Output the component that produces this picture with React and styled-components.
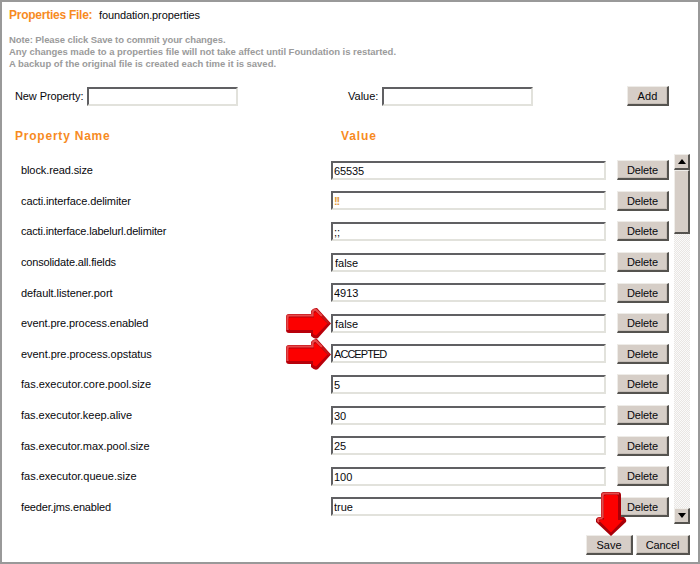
import React from "react";
import styled, { createGlobalStyle, css } from "styled-components";

const GlobalStyle = createGlobalStyle`
  * { box-sizing: border-box; }
  body { margin: 0; background: #fff; }
`;

const Frame = styled.main`
  width: 700px;
  height: 564px;
  border: 2px solid #999;
  background: #fff;
  color: #08080c;
  font: 11px/14px "Liberation Sans", Arial, sans-serif;
  overflow: hidden;
  white-space: nowrap;
`;

const FileHeader = styled.header`
  display: flex;
  align-items: baseline;
  height: 20px;
  padding: 6px 0 0 7px;
`;

const FileTitle = styled.h1`
  margin: 0;
  width: 90px;
  font-size: 12px;
  line-height: 15px;
  letter-spacing: -0.25px;
  color: #f78b1f;
`;

const Label = styled.span`
  letter-spacing: ${(p) => p.$track || 0}px;
`;

const Note = styled.p`
  margin: 0;
  padding: 12px 0 0 7px;
  height: 64px;
  font-size: 9.5px;
  font-weight: bold;
  line-height: 12px;
  color: #9b9b9b;
`;

const NoteLine = styled.span`
  display: block;
  letter-spacing: ${(p) => p.$track}px;
`;

const NewPropertyForm = styled.section`
  display: grid;
  grid-template-columns: 72px 151px 110px 34px 151px 94px 42px;
  align-items: center;
  height: 19px;
  padding-left: 13px;
`;

const Field = styled.input`
  display: block;
  width: 100%;
  min-width: 0;
  height: 19px;
  margin: 0;
  padding: 1px 1px 0 ${(p) => p.$inset ?? 1}px;
  border: 2px solid;
  border-color: #606063 #e2e2dc #e2e2dc #606063;
  border-radius: 0;
  outline: 0;
  background: #fff;
  color: ${(p) => p.$color || "#08080c"};
  font: ${(p) => (p.$color ? "bold" : "normal")} 11px/14px "Liberation Sans", Arial, sans-serif;
  letter-spacing: ${(p) => p.$track || 0}px;
`;

const Button = styled.button`
  display: block;
  width: ${(p) => p.$width}px;
  height: 20px;
  margin: 0;
  padding: 1px 0 0;
  border: solid;
  border-width: 1px 2px 2px 1px;
  border-color: #eeece8 #55534f #55534f #eeece8;
  border-radius: 0;
  background: #d6cec7;
  box-shadow: inset -1px -1px 0 #c5bdb6;
  color: #08080c;
  font: 11px/14px "Liberation Sans", Arial, sans-serif;
  letter-spacing: ${(p) => p.$track ?? -0.15}px;
`;

const ColumnHeads = styled.div`
  display: grid;
  grid-template-columns: 326px 1fr;
  height: 47px;
  padding: 24px 0 0 13px;
  font-size: 12px;
  font-weight: bold;
  line-height: 15px;
  color: #f78b1f;
`;

const ListPane = styled.section`
  display: grid;
  grid-template-columns: 672px 17px;
  height: 372px;
`;

const Rows = styled.div`
  padding-top: 3px;
`;

const Row = styled.div`
  position: relative;
  display: grid;
  grid-template-columns: 310px 275px 11px 52px;
  align-items: center;
  height: 30.6px;
  padding-left: 19px;
`;

const DeleteCell = styled.div`
  grid-column: 4;
`;

const ScrollBar = styled.div`
  display: flex;
  flex-direction: column;
  width: 16px;
  height: 370px;
  margin-top: 2px;
  background: repeating-conic-gradient(#e9e6e3 0 25%, #fafafa 0 50%) 0 0 / 2px 2px;
`;

const bevel = css`
  border: solid;
  border-width: 1px 2px 2px 1px;
  border-color: #efede9 #55534f #55534f #efede9;
  background: #d6cec7;
`;

const ScrollButton = styled.div`
  ${bevel}
  display: grid;
  place-items: center;
  height: 16px;
`;

const ScrollThumb = styled.div`
  ${bevel}
  height: 64px;
  margin-bottom: auto;
`;

const Actions = styled.footer`
  position: relative;
  display: flex;
  justify-content: flex-end;
  gap: 3px;
  padding: 11px 8px 0 0;
`;

const RowArrow = styled.svg`
  position: absolute;
  left: 284px;
  top: 0;
`;

const SaveArrow = styled.svg`
  position: absolute;
  left: 594px;
  top: -32px;
`;

const properties = [
  { name: "block.read.size", value: "65535", track: -0.1, valueTrack: -0.1 },
  { name: "cacti.interface.delimiter", value: "!!", track: -0.11, color: "#e39a3c", valueTrack: -1.2 },
  { name: "cacti.interface.labelurl.delimiter", value: ";;", track: -0.17 },
  { name: "consolidate.all.fields", value: "false", track: -0.16, inset: 2 },
  { name: "default.listener.port", value: "4913", track: -0.07 },
  { name: "event.pre.process.enabled", value: "false", track: -0.09, inset: 2, marked: true },
  { name: "event.pre.process.opstatus", value: "ACCEPTED", track: -0.05, valueTrack: -0.95, marked: true },
  { name: "fas.executor.core.pool.size", value: "5" },
  { name: "fas.executor.keep.alive", value: "30", track: -0.04 },
  { name: "fas.executor.max.pool.size", value: "25", track: -0.04 },
  { name: "fas.executor.queue.size", value: "100" },
  { name: "feeder.jms.enabled", value: "true", track: -0.17 },
];

function RightArrow() {
  return (
    <RowArrow width="46" height="32" viewBox="0 0 46 32">
      <path d="M3 6H25V3Q27 0 31 0L45 15.5L32 30Q29 32 25 28V25H3Q0 25 0 22V9Q0 6 3 6Z" fill="#b8000a" />
      <path d="M1.5 22V9Q1.5 7.5 3 7.5H26.5V4Q27.5 1.5 30 2L36 8" fill="none" stroke="#e84a4a" strokeWidth="2.2" />
      <path d="M36 8L43 15.5" stroke="#c01818" strokeWidth="2" />
      <path d="M4 9.5H28V5L30 4L41.5 15.5L30 27.5L27 26V22H4L2.5 20V11Z" fill="#fc0000" />
    </RowArrow>
  );
}

function DownArrow() {
  return (
    <SaveArrow width="31" height="45" viewBox="0 0 31 45">
      <path d="M8 0H22Q25 0 25 3V25H28Q31 27 30 30L15 44L0 30Q-1 26 3 25H5V3Q5 0 8 0Z" fill="#a80008" />
      <path d="M6.5 26V4Q6.5 1.5 9 1.5H23M6.5 26.5H3Q1 28 3 30" fill="none" stroke="#e84a4a" strokeWidth="2.2" />
      <path d="M8 4L10 3H21L22 4V28H27L15 40.5L3.5 29L5 27.5H8Z" fill="#fc0000" />
    </SaveArrow>
  );
}

function ScrollArrow({ down }) {
  return (
    <svg width="8" height="5" viewBox="0 0 8 5">
      <path d={down ? "M0 0H8L4 5Z" : "M0 5H8L4 0Z"} fill="#000" />
    </svg>
  );
}

export default function App() {
  return (
    <>
      <GlobalStyle />
      <Frame>
        <FileHeader>
          <FileTitle>Properties File:</FileTitle>
          <Label $track={-0.12}>foundation.properties</Label>
        </FileHeader>
        <Note>
          <NoteLine $track={-0.09}>Note: Please click Save to commit your changes.</NoteLine>
          <NoteLine $track={-0.035}>Any changes made to a properties file will not take affect until Foundation is restarted.</NoteLine>
          <NoteLine $track={-0.03}>A backup of the original file is created each time it is saved.</NoteLine>
        </Note>
        <NewPropertyForm>
          <Label $track={-0.1}>New Property:</Label>
          <Field aria-label="New Property" />
          <span />
          <Label>Value:</Label>
          <Field aria-label="Value" />
          <span />
          <Button $width={42} $track={0.1}>Add</Button>
        </NewPropertyForm>
        <ColumnHeads>
          <Label $track={0.78}>Property Name</Label>
          <Label $track={0.9}>Value</Label>
        </ColumnHeads>
        <ListPane>
          <Rows>
            {properties.map((p) => (
              <Row key={p.name}>
                <Label $track={p.track}>{p.name}</Label>
                <Field
                  aria-label={p.name}
                  defaultValue={p.value}
                  $color={p.color}
                  $track={p.valueTrack}
                  $inset={p.inset}
                />
                <DeleteCell><Button $width={52}>Delete</Button></DeleteCell>
                {p.marked && <RightArrow />}
              </Row>
            ))}
          </Rows>
          <ScrollBar>
            <ScrollButton><ScrollArrow /></ScrollButton>
            <ScrollThumb />
            <ScrollButton><ScrollArrow down /></ScrollButton>
          </ScrollBar>
        </ListPane>
        <Actions>
          <Button $width={47} $track={0}>Save</Button>
          <Button $width={54}>Cancel</Button>
          <DownArrow />
        </Actions>
      </Frame>
    </>
  );
}
